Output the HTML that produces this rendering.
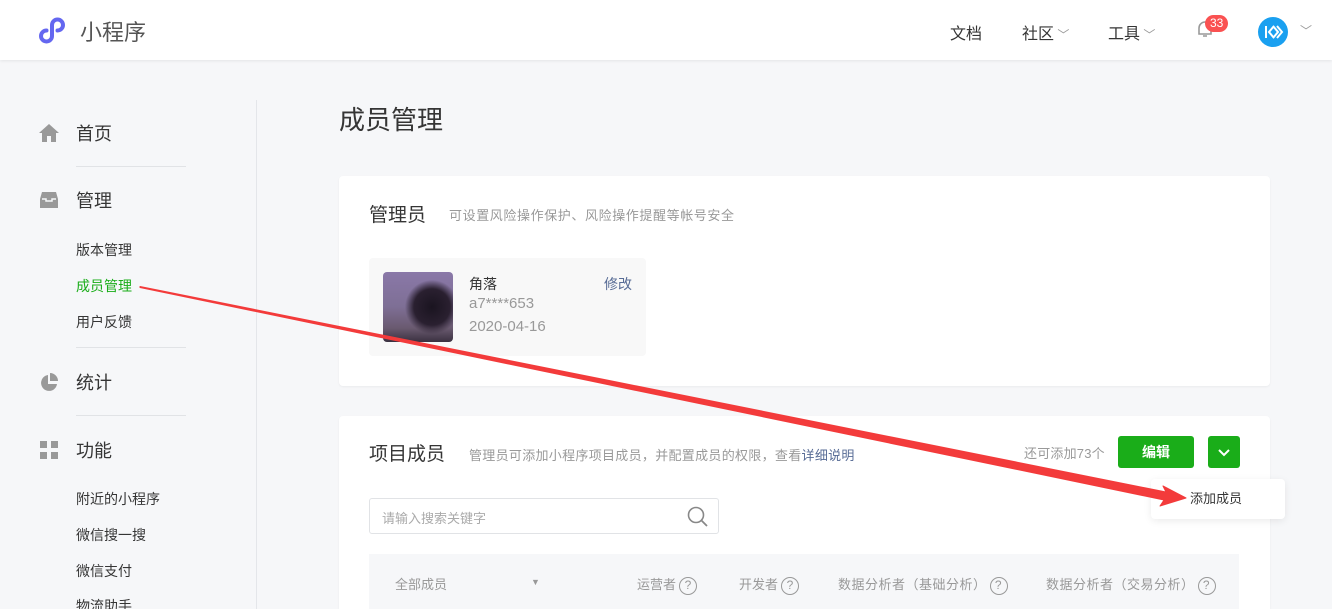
<!DOCTYPE html>
<html><head><meta charset="utf-8"><style>
*{margin:0;padding:0;box-sizing:border-box}
html,body{width:1332px;height:609px;overflow:hidden}
body{background:#f6f7f9;font-family:"Liberation Sans","Noto Sans CJK SC",sans-serif;position:relative;color:#353535}
.top{position:absolute;left:0;top:0;width:1332px;height:60px;background:#fff;box-shadow:0 1px 3px rgba(0,0,0,.08)}
.abs{position:absolute;white-space:nowrap}
.side{position:absolute;left:0;top:100px;width:257px;height:509px;border-right:1px solid #e4e6ea}
.hr{position:absolute;left:76px;width:110px;height:1px;background:#e1e3e6}
.card{position:absolute;left:339px;width:931px;background:#fff;border-radius:4px;box-shadow:0 1px 2px rgba(0,0,0,.05)}
.q{display:inline-block;width:18px;height:18px;border:1.5px solid #999;border-radius:50%;font-size:12px;line-height:15px;text-align:center;color:#999;vertical-align:middle;margin-left:3px}
.sub{font-size:13px;color:#999;letter-spacing:0.6px}
</style></head><body>
<div class="top">
<svg class="abs" style="left:39px;top:15px" width="32" height="30" viewBox="0 0 32 30"><path d="M13 10 V21 a5.5 5.5 0 1 1 -5.5 -5.5 M13 21 V10 a5.5 5.5 0 1 1 5.5 5.5" fill="none" stroke="#6467f0" stroke-width="4" stroke-linecap="round"/></svg>
<div class="abs" style="left:80px;top:15px;font-size:22px;color:#555">小程序</div>
<div class="abs" style="left:950px;top:20px;font-size:16px">文档</div>
<div class="abs" style="left:1022px;top:20px;font-size:16px">社区<span style="color:#999;font-size:12px"> ﹀</span></div>
<div class="abs" style="left:1108px;top:20px;font-size:16px">工具<span style="color:#999;font-size:12px"> ﹀</span></div>
<svg class="abs" style="left:1195px;top:19px" width="20" height="20" viewBox="0 0 20 20"><path d="M4 15 V9 a6 6 0 0 1 12 0 V15 Z M8 17 h4" fill="none" stroke="#999" stroke-width="1.6"/></svg>
<div class="abs" style="left:1205px;top:15px;background:#fa5151;color:#fff;font-size:12px;border-radius:9px;padding:1px 5px;line-height:15px">33</div>
<div class="abs" style="left:1258px;top:17px;width:30px;height:30px;border-radius:50%;background:#1aa0f0"><svg width="30" height="30"><path d="M8 9 V21 M16 9 L11 15 L16 21 M15 9 L20 15 L15 21 M19 9 L24 15 L19 21" fill="none" stroke="#fff" stroke-width="2"/></svg></div>
<div class="abs" style="left:1300px;top:22px;color:#999;font-size:12px">﹀</div>
</div>
<div class="side">
<svg class="abs" style="left:38px;top:23px" width="22" height="20" viewBox="0 0 22 20"><path d="M11 1 L1 10 H4 V19 H9 V13 H13 V19 H18 V10 H21 Z" fill="#999"/></svg>
<div class="abs" style="left:76px;top:20px;font-size:18px">首页</div>
<div class="hr" style="top:66px"></div>
<svg class="abs" style="left:39px;top:91px" width="20" height="18" viewBox="0 0 20 18"><path d="M3 1 H17 L19 8 V17 H1 V8 Z" fill="#999"/><path d="M3 8 H7 V10 H13 V8 H17" fill="none" stroke="#f6f7f9" stroke-width="1.5"/></svg>
<div class="abs" style="left:76px;top:87px;font-size:18px">管理</div>
<div class="abs" style="left:76px;top:140px;font-size:14px">版本管理</div>
<div class="abs" style="left:76px;top:176px;font-size:14px;color:#1aad19">成员管理</div>
<div class="abs" style="left:76px;top:212px;font-size:14px">用户反馈</div>
<div class="hr" style="top:247px"></div>
<svg class="abs" style="left:39px;top:273px" width="20" height="20" viewBox="0 0 20 20"><path d="M9 2 A8 8 0 1 0 18 11 H9 Z" fill="#999"/><path d="M11 0 A8 8 0 0 1 19 8 H11 Z" fill="#999"/></svg>
<div class="abs" style="left:76px;top:269px;font-size:18px">统计</div>
<div class="hr" style="top:315px"></div>
<svg class="abs" style="left:40px;top:341px" width="20" height="20"><rect x="0" y="0" width="7" height="7" fill="#999"/><rect x="11" y="0" width="7" height="7" fill="#999"/><rect x="0" y="11" width="7" height="7" fill="#999"/><rect x="11" y="11" width="7" height="7" fill="#999"/></svg>
<div class="abs" style="left:76px;top:337px;font-size:18px">功能</div>
<div class="abs" style="left:76px;top:389px;font-size:14px">附近的小程序</div>
<div class="abs" style="left:76px;top:425px;font-size:14px">微信搜一搜</div>
<div class="abs" style="left:76px;top:461px;font-size:14px">微信支付</div>
<div class="abs" style="left:76px;top:496px;font-size:14px">物流助手</div>
</div>
<div class="abs" style="left:339px;top:100px;font-size:26px">成员管理</div>
<div class="card" style="top:176px;height:210px">
<div class="abs" style="left:30px;top:24px;font-size:19px">管理员</div>
<div class="abs sub" style="left:110px;top:29px">可设置风险操作保护、风险操作提醒等帐号安全</div>
<div class="abs" style="left:30px;top:82px;width:277px;height:98px;background:#f8f8f8;border-radius:4px">
<div class="abs" style="left:14px;top:14px;width:70px;height:70px;border-radius:4px;background:radial-gradient(circle at 70% 50%,#1a1420 0,#2a2030 30%,transparent 45%),linear-gradient(180deg,#8a78a8,#7e6f95 50%,#6a5a70 80%,#3a3040)"></div>
<div class="abs" style="left:100px;top:16px;font-size:14px">角落</div>
<div class="abs" style="left:100px;top:37px;font-size:15px;color:#999">a7****653</div>
<div class="abs" style="left:100px;top:60px;font-size:15px;color:#999">2020-04-16</div>
<div class="abs" style="left:235px;top:16px;font-size:14px;color:#576b95">修改</div>
</div>
</div>
<div class="card" style="top:416px;height:193px;border-radius:4px 4px 0 0">
<div class="abs" style="left:30px;top:23px;font-size:19px">项目成员</div>
<div class="abs sub" style="left:130px;top:29px;letter-spacing:0.3px">管理员可添加小程序项目成员，并配置成员的权限，查看<span style="color:#576b95">详细说明</span></div>
<div class="abs sub" style="left:685px;top:27px;letter-spacing:0.2px">还可添加73个</div>
<div class="abs" style="left:779px;top:20px;width:76px;height:32px;background:#1aad19;border-radius:3px;color:#fff;font-size:14px;font-weight:bold;text-align:center;line-height:32px">编辑</div>
<div class="abs" style="left:869px;top:20px;width:32px;height:32px;background:#1aad19;border-radius:3px"><svg width="32" height="32"><path d="M11 14 L16 19 L21 14" fill="none" stroke="#fff" stroke-width="2"/></svg></div>
<div class="abs" style="left:30px;top:82px;width:350px;height:36px;border:1px solid #e1e3e6;border-radius:3px"><span class="abs sub" style="left:12px;top:9px;color:#aaa;letter-spacing:0">请输入搜索关键字</span><svg class="abs" style="left:316px;top:6px" width="24" height="24"><circle cx="10" cy="10" r="7.5" fill="none" stroke="#888" stroke-width="1.6"/><path d="M15.5 15.5 L21 21" stroke="#888" stroke-width="1.8"/></svg></div>
<div class="abs" style="left:30px;top:138px;width:870px;height:60px;background:#f6f7f9">
<span class="abs sub" style="left:26px;top:20px;letter-spacing:0">全部成员</span>
<span class="abs" style="left:162px;top:23px;font-size:9px;color:#999">▼</span>
<span class="abs sub" style="left:268px;top:20px;letter-spacing:0">运营者<span class="q">?</span></span>
<span class="abs sub" style="left:370px;top:20px;letter-spacing:0">开发者<span class="q">?</span></span>
<span class="abs sub" style="left:469px;top:20px;letter-spacing:0.5px">数据分析者（基础分析）<span class="q">?</span></span>
<span class="abs sub" style="left:677px;top:20px;letter-spacing:0.5px">数据分析者（交易分析）<span class="q">?</span></span>
</div>
</div>
<div class="abs" style="left:1151px;top:479px;width:134px;height:40px;background:#fff;border-radius:4px;box-shadow:0 2px 8px rgba(0,0,0,.08);font-size:13px;line-height:40px;padding-left:39px">添加成员</div>
<svg class="abs" style="left:0;top:0" width="1332" height="609"><polygon points="140,286.5 1166,492 1163,486 1186,498 1160,506 1164,500 140,287.5" fill="#f33b3b" stroke="#f33b3b" stroke-width="1" stroke-linejoin="round"/></svg>
</body></html>
